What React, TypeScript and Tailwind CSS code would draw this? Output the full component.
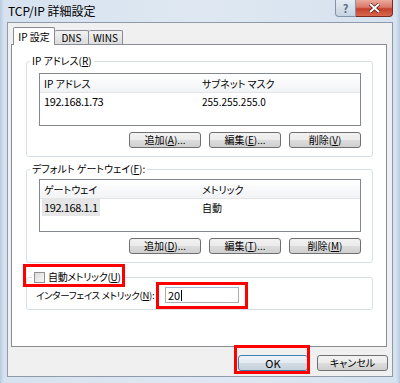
import type { ReactNode } from 'react';

const FONT = "font-['Noto_Sans_CJK_JP','Noto_Sans',sans-serif] [font-feature-settings:'palt']";

function Btn({ children, className = '', isDefault = false }: { children: ReactNode; className?: string; isDefault?: boolean }) {
  return (
    <button
      className={`flex h-[16px] items-center justify-center rounded-[3px] border text-[10px] leading-none text-black ${
        isDefault
          ? 'border-[#3c7fb1] bg-[linear-gradient(#eef4f8_0%,#e4ebf1_49%,#d3dce4_50%,#c6d1da_100%)]'
          : 'border-[#707070] bg-[linear-gradient(#f2f2f2_0%,#ebebeb_49%,#dddddd_50%,#cfcfcf_100%)]'
      } ${className}`}
    >
      {children}
    </button>
  );
}

function ListView({ cols, row, selected = false }: { cols: [string, string]; row: [string, string]; selected?: boolean }) {
  return (
    <div className="h-[53px] border border-[#828790] bg-white">
      <div className="flex h-[19px] items-center border-b border-[#e3e5e8] bg-[linear-gradient(#ffffff,#f2f3f5)] text-[10px]">
        <div className="w-[158px] pl-[4px]">{cols[0]}</div>
        <div className="pl-[4px]">{cols[1]}</div>
      </div>
      <div className="flex h-[17px] items-center text-[11px] tracking-[-0.4px]">
        <div className="w-[158px] pl-[2px]">
          <span className={`px-[2px] py-[1px] ${selected ? 'bg-[#e6e6e6]' : ''}`}>{row[0]}</span>
        </div>
        <div className="pl-[4px] text-[10px] tracking-normal">{row[1]}</div>
      </div>
    </div>
  );
}

function Buttons({ keys }: { keys: [string, string, string] }) {
  return (
    <div className="mt-[6px] flex justify-end gap-[8px]">
      <Btn className="w-[72px]">追加(<u>{keys[0]}</u>)...</Btn>
      <Btn className="w-[72px]">編集(<u>{keys[1]}</u>)...</Btn>
      <Btn className="w-[72px]">削除(<u>{keys[2]}</u>)</Btn>
    </div>
  );
}

export default function App() {
  return (
    <div className={`flex h-[383px] w-[400px] flex-col bg-[linear-gradient(90deg,#b9cbe0_0px,#d6e2ef_4px,#dfe8f2_50%,#d6e2ef_396px,#b9cbe0_400px)] text-black ${FONT}`}>
      {/* Title bar */}
      <div className="relative flex h-[22px] items-center pl-[8px] text-[12px]">
        <span>TCP/IP 詳細設定</span>
        <div className="absolute right-[7px] top-0 flex">
          <div className="flex h-[17px] w-[21px] items-center justify-center rounded-bl-[4px] border border-t-0 border-[#8394a8] bg-[linear-gradient(#e4ebf3,#c5d3e2)] text-[11px] font-bold text-[#5c6e82]">
            ?
          </div>
          <div className="flex h-[17px] w-[37px] items-center justify-center rounded-br-[4px] border border-l-0 border-t-0 border-[#7a2a20] bg-[linear-gradient(#e9a99b_0%,#d9786a_45%,#c4402c_55%,#d9684f_100%)]">
            <svg width="11" height="10" viewBox="0 0 11 10">
              <path d="M1 1 L10 9 M10 1 L1 9" stroke="#5a1a12" strokeWidth="3.4" />
              <path d="M1 1 L10 9 M10 1 L1 9" stroke="#ffffff" strokeWidth="2" />
            </svg>
          </div>
        </div>
      </div>

      {/* Dialog body */}
      <div className="mx-[7px] flex h-[355px] flex-col border border-[#8e9bab] bg-[#f0f0f0] pl-[3px] pr-[3px] pt-[4px]">
        {/* Tabs */}
        <div className="flex h-[17px] items-end pl-[2px] text-[10px]">
          <div className="relative z-10 -mb-px flex h-[18px] w-[42px] items-center justify-center rounded-t-[2px] border border-b-0 border-[#898c95] bg-white">
            IP 設定
          </div>
          <div className="flex h-[14px] w-[34px] items-center justify-center rounded-t-[2px] border border-b-0 border-l-0 border-[#898c95] bg-[linear-gradient(#f2f2f2,#dcdcdc)]">
            DNS
          </div>
          <div className="flex h-[14px] w-[34px] items-center justify-center rounded-t-[2px] border border-b-0 border-l-0 border-[#898c95] bg-[linear-gradient(#f2f2f2,#dcdcdc)]">
            WINS
          </div>
        </div>

        {/* Tab panel */}
        <div className="h-[303px] w-[376px] border border-[#898c95] bg-white pl-[14px] pt-[9px] text-[10px]">
          <fieldset className="w-[347px] rounded-[3px] border border-[#d5dfe5]">
            <legend className="ml-[3px] px-[2px] leading-[14px]">
              IP アドレス(<u>R</u>)
            </legend>
            <div className="pb-[8px] pl-[12px] pr-[11px] pt-[5px]">
              <ListView cols={['IP アドレス', 'サブネット マスク']} row={['192.168.1.73', '255.255.255.0']} />
              <Buttons keys={['A', 'E', 'V']} />
            </div>
          </fieldset>

          <fieldset className="mt-[5px] w-[347px] rounded-[3px] border border-[#d5dfe5]">
            <legend className="ml-[3px] px-[2px] leading-[14px]">
              デフォルト ゲートウェイ(<u>F</u>):
            </legend>
            <div className="pb-[8px] pl-[12px] pr-[11px] pt-[3px]">
              <ListView cols={['ゲートウェイ', 'メトリック']} row={['192.168.1.1', '自動']} selected />
              <Buttons keys={['D', 'T', 'M']} />
            </div>
          </fieldset>

          <fieldset className="mt-[7px] w-[347px] rounded-[3px] border border-[#d5dfe5]">
            <legend className="relative ml-[5px] flex items-center gap-[3px] px-[2px] leading-[14px]">
              <span className="h-[11px] w-[11px] border border-[#8f8f8f] bg-[linear-gradient(135deg,#dcdcdc,#f6f6f6)]" />
              <span className="tracking-[-0.3px]">
                自動メトリック(<u>U</u>)
              </span>
              <span className="absolute -bottom-[3px] -left-[9px] -right-[3px] -top-[6px] border-[3px] border-[#ff0000]" />
            </legend>
            <div className="flex items-center pb-[6px] pl-[9px] pt-[3px]">
              <span className="w-[129px] shrink-0 whitespace-nowrap text-[9.5px] tracking-[-0.3px]">
                インターフェイス メトリック(<u>N</u>):
              </span>
              <div className="relative">
                <div className="flex h-[16px] w-[74px] items-center border border-[#abadb3] border-t-[#a0b8d0] bg-white pl-[2px] text-[11px]">
                  20<span className="ml-px h-[11px] w-px bg-black" />
                </div>
                <span className="absolute -bottom-[6px] -left-[9px] -right-[9px] -top-[5px] border-[3px] border-[#ff0000]" />
              </div>
            </div>
          </fieldset>
        </div>

        {/* Footer */}
        <div className="mt-[8px] flex justify-end gap-[9px] pr-[1px]">
          <div className="relative">
            <Btn className="w-[70px] text-[11px]" isDefault>
              OK
            </Btn>
            <span className="absolute -bottom-[3px] -left-[4px] -right-[2px] -top-[10px] border-[3px] border-[#ff0000]" />
          </div>
          <Btn className="w-[71px]">キャンセル</Btn>
        </div>
      </div>
    </div>
  );
}
